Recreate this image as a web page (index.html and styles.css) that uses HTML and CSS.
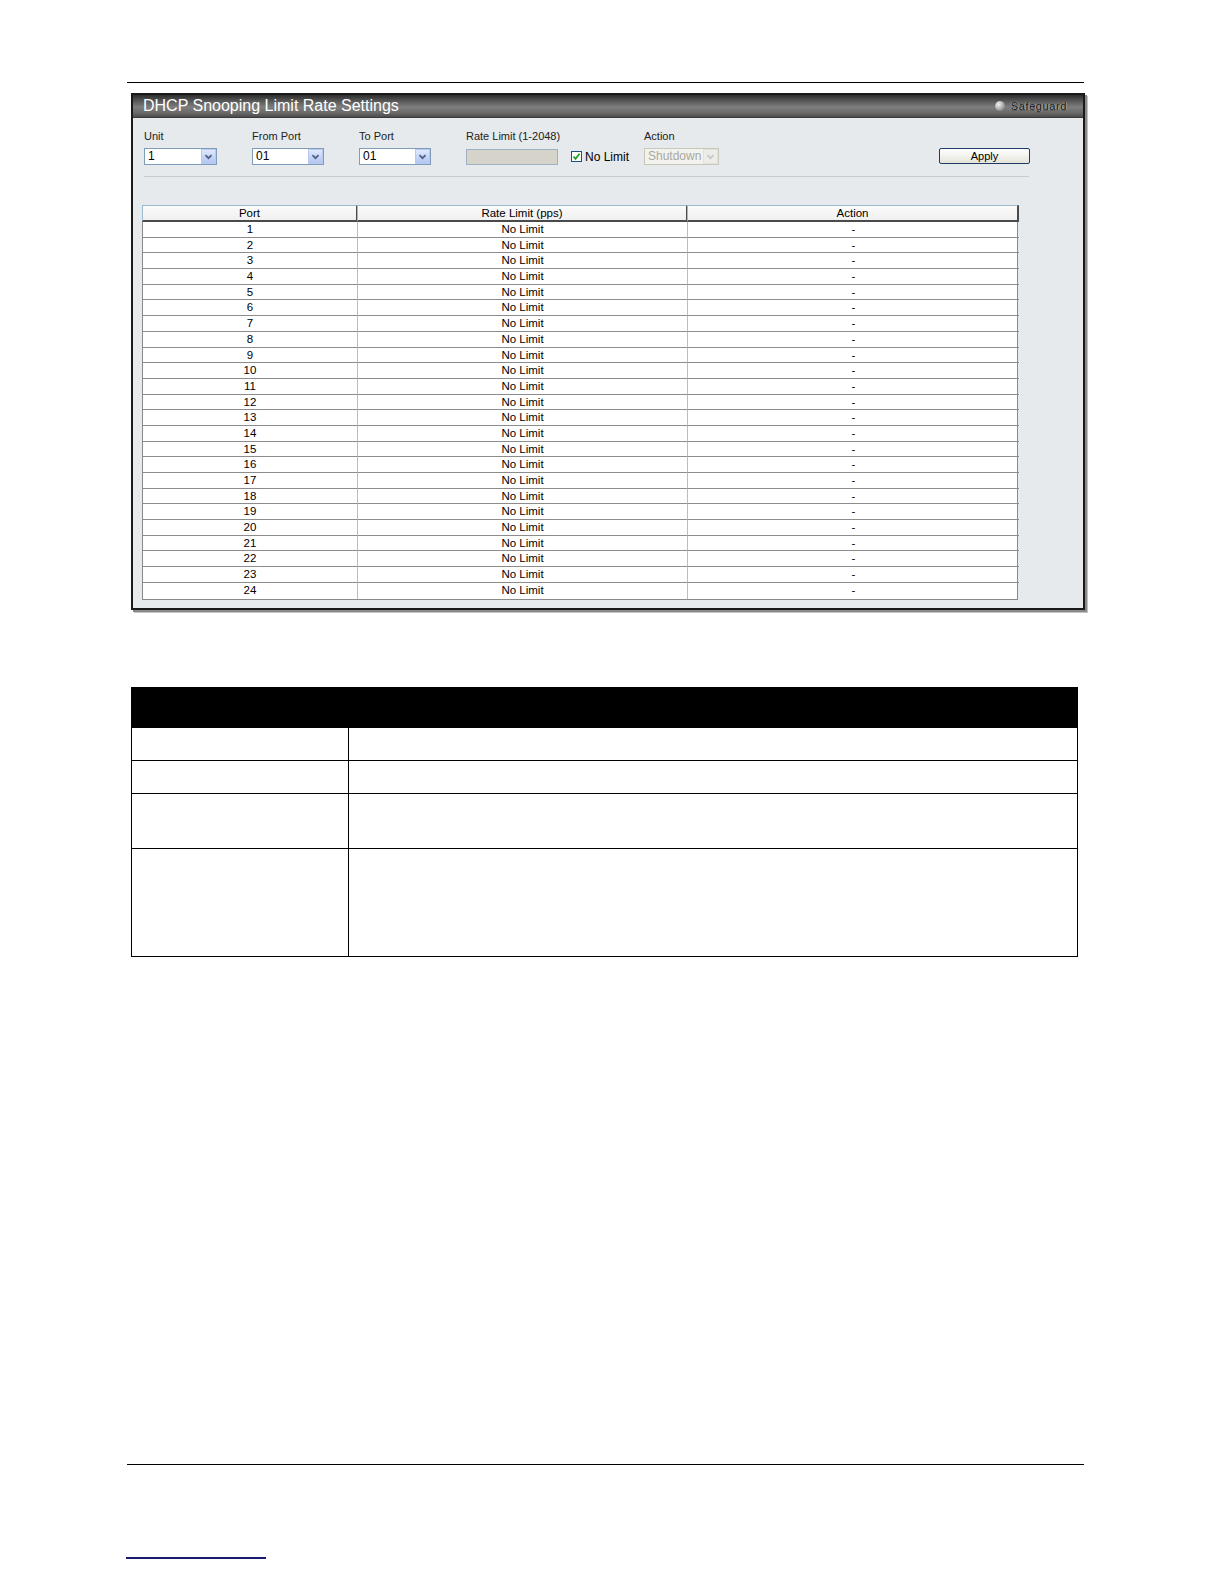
FILE: index.html
```html
<!DOCTYPE html>
<html>
<head>
<meta charset="utf-8">
<title>DHCP Snooping Limit Rate Settings</title>
<link rel="stylesheet" href="styles.css">
</head>
<body>
<div class="page">
  <div class="rule top-rule"></div>

  <div class="panel">
    <div class="titlebar">
      <span class="title">DHCP Snooping Limit Rate Settings</span>
      <span class="safeguard"><span class="led"></span>Safeguard</span>
    </div>
    <div class="panel-body">
      <div class="form-row">
        <div class="field">
          <div class="label">Unit</div>
          <div class="select w73"><span class="sel-text">1</span><span class="arrow"><svg width="15" height="15" viewBox="0 0 15 15"><path d="M4 6 L7.5 9.5 L11 6" fill="none" stroke="#4d6185" stroke-width="2"/></svg></span></div>
        </div>
        <div class="field">
          <div class="label">From Port</div>
          <div class="select w72"><span class="sel-text">01</span><span class="arrow"><svg width="15" height="15" viewBox="0 0 15 15"><path d="M4 6 L7.5 9.5 L11 6" fill="none" stroke="#4d6185" stroke-width="2"/></svg></span></div>
        </div>
        <div class="field">
          <div class="label">To Port</div>
          <div class="select w72"><span class="sel-text">01</span><span class="arrow"><svg width="15" height="15" viewBox="0 0 15 15"><path d="M4 6 L7.5 9.5 L11 6" fill="none" stroke="#4d6185" stroke-width="2"/></svg></span></div>
        </div>
        <div class="field">
          <div class="label">Rate Limit (1-2048)</div>
          <div class="rate-line">
            <div class="text-input"></div>
            <span class="checkbox"><svg width="9" height="9" viewBox="0 0 9 9"><path d="M1.5 4.5 L3.5 6.8 L7.5 1.8" fill="none" stroke="#21a121" stroke-width="1.8"/></svg></span>
            <span class="cb-label">No Limit</span>
          </div>
        </div>
        <div class="field">
          <div class="label">Action</div>
          <div class="select disabled w75"><span class="sel-text">Shutdown</span><span class="arrow"><svg width="15" height="15" viewBox="0 0 15 15"><path d="M4 6 L7.5 9.5 L11 6" fill="none" stroke="#c8c8c8" stroke-width="2"/></svg></span></div>
        </div>
        <div class="field apply-field">
          <div class="button">Apply</div>
        </div>
      </div>
      <div class="separator"></div>

      <div class="data-table">
        <div class="th">Port</div>
        <div class="th">Rate Limit (pps)</div>
        <div class="th">Action</div>
        <div class="td c1">1</div><div class="td c2">No Limit</div><div class="td c3">-</div>
        <div class="td c1">2</div><div class="td c2">No Limit</div><div class="td c3">-</div>
        <div class="td c1">3</div><div class="td c2">No Limit</div><div class="td c3">-</div>
        <div class="td c1">4</div><div class="td c2">No Limit</div><div class="td c3">-</div>
        <div class="td c1">5</div><div class="td c2">No Limit</div><div class="td c3">-</div>
        <div class="td c1">6</div><div class="td c2">No Limit</div><div class="td c3">-</div>
        <div class="td c1">7</div><div class="td c2">No Limit</div><div class="td c3">-</div>
        <div class="td c1">8</div><div class="td c2">No Limit</div><div class="td c3">-</div>
        <div class="td c1">9</div><div class="td c2">No Limit</div><div class="td c3">-</div>
        <div class="td c1">10</div><div class="td c2">No Limit</div><div class="td c3">-</div>
        <div class="td c1">11</div><div class="td c2">No Limit</div><div class="td c3">-</div>
        <div class="td c1">12</div><div class="td c2">No Limit</div><div class="td c3">-</div>
        <div class="td c1">13</div><div class="td c2">No Limit</div><div class="td c3">-</div>
        <div class="td c1">14</div><div class="td c2">No Limit</div><div class="td c3">-</div>
        <div class="td c1">15</div><div class="td c2">No Limit</div><div class="td c3">-</div>
        <div class="td c1">16</div><div class="td c2">No Limit</div><div class="td c3">-</div>
        <div class="td c1">17</div><div class="td c2">No Limit</div><div class="td c3">-</div>
        <div class="td c1">18</div><div class="td c2">No Limit</div><div class="td c3">-</div>
        <div class="td c1">19</div><div class="td c2">No Limit</div><div class="td c3">-</div>
        <div class="td c1">20</div><div class="td c2">No Limit</div><div class="td c3">-</div>
        <div class="td c1">21</div><div class="td c2">No Limit</div><div class="td c3">-</div>
        <div class="td c1">22</div><div class="td c2">No Limit</div><div class="td c3">-</div>
        <div class="td c1">23</div><div class="td c2">No Limit</div><div class="td c3">-</div>
        <div class="td c1 last">24</div><div class="td c2 last">No Limit</div><div class="td c3 last">-</div>
      </div>
    </div>
  </div>

  <table class="desc">
    <tr class="desc-head"><th></th><th></th></tr>
    <tr class="r1"><td class="dl"></td><td></td></tr>
    <tr class="r2"><td class="dl"></td><td></td></tr>
    <tr class="r3"><td class="dl"></td><td></td></tr>
    <tr class="r4"><td class="dl"></td><td></td></tr>
  </table>

  <div class="rule bottom-rule"></div>
  <div class="link-line"></div>
</div>
</body>
</html>
```

FILE: styles.css
```css
html, body {
  margin: 0;
  padding: 0;
  background: #ffffff;
}

body {
  font-family: "Liberation Sans", Arial, sans-serif;
  color: #000;
}

.page {
  width: 1224px;
  padding-top: 82px;
}

.rule {
  height: 1px;
  background: #000;
  margin-left: 127px;
  width: 957px;
}

/* ---------- panel ---------- */
.panel {
  margin-top: 10px;
  margin-left: 131px;
  width: 950px;
  border: 2px solid #1a1a1a;
  box-shadow: 2px 2px 0 #8a8a8a, 3px 3px 0 #c4c4c4;
  background: #e6eaec;
}

.titlebar {
  height: 22px;
  background: linear-gradient(#2c2c2c 0%, #555 25%, #7e7e7e 55%, #6a6a6a 80%, #4c4c4c 100%);
  border-bottom: 1px solid #3a3a3a;
  display: flex;
  align-items: center;
  justify-content: space-between;
  padding: 0 16px 0 10px;
}

.title {
  color: #fff;
  font-size: 16px;
  line-height: 22px;
}

.safeguard {
  display: flex;
  align-items: center;
  font-size: 11px;
  color: #1e1e1e;
  text-shadow: -1px 0 0 #9c9c9c, 1px 0 0 #9c9c9c, 0 1px 0 #5a5a5a;
  letter-spacing: 0.6px;
}

.led {
  width: 10px;
  height: 10px;
  border-radius: 50%;
  background: radial-gradient(circle at 35% 35%, #f2f2f2 0%, #b5b5b5 45%, #5e5e5e 100%);
  margin-right: 6px;
}

.panel-body {
  padding: 11px 0 8px 0;
}

.form-row {
  display: grid;
  grid-template-columns: 108px 107px 107px 178px 295px 91px;
  padding-left: 11px;
}

.label {
  font-size: 11px;
  line-height: 14px;
  color: #222;
  height: 14px;
  margin-bottom: 5px;
}

.select {
  height: 17px;
  box-sizing: border-box;
  border: 1px solid #7f9db9;
  background: #fff;
  display: flex;
  align-items: center;
  justify-content: space-between;
  padding-left: 3px;
}

.w73 { width: 73px; }
.w72 { width: 72px; }
.w75 { width: 75px; }

.sel-text {
  font-size: 12px;
  line-height: 15px;
  color: #000;
}

.arrow {
  width: 15px;
  height: 15px;
  box-sizing: border-box;
  border: 1px solid #b9c9ef;
  background: linear-gradient(#dfe8fd, #c3d3f7 60%, #b4c6f0);
  display: flex;
  align-items: center;
  justify-content: center;
}

.arrow svg {
  display: block;
}

.select.disabled {
  border-color: #c9c7ba;
  background: #f2f2ef;
}

.select.disabled .sel-text {
  color: #a8a8a0;
}

.select.disabled .arrow {
  border-color: #e2e2dc;
  background: #ecece8;
}

.rate-line {
  display: flex;
  align-items: center;
  height: 17px;
}

.text-input {
  width: 92px;
  height: 16px;
  box-sizing: border-box;
  border: 1px solid #9eb0c4;
  background: #d6d3ca;
  margin-top: 1px;
}

.checkbox {
  width: 11px;
  height: 11px;
  box-sizing: border-box;
  border: 1px solid #1c5180;
  background: #fff;
  margin-left: 13px;
  display: flex;
  align-items: center;
  justify-content: center;
}

.checkbox svg {
  display: block;
}

.cb-label {
  font-size: 12px;
  margin-left: 3px;
  color: #000;
}

.apply-field {
  display: flex;
  align-items: flex-end;
}

.button {
  width: 91px;
  height: 16px;
  box-sizing: border-box;
  border: 1px solid #1e3c66;
  border-radius: 2px;
  background: linear-gradient(#ffffff, #f0f0ea 60%, #e2e2da);
  font-size: 11px;
  line-height: 14px;
  text-align: center;
  color: #000;
  margin-bottom: 1px;
}

.separator {
  height: 1px;
  background: #c8cccf;
  margin: 11px 0 0 11px;
  width: 885px;
}

/* ---------- data table ---------- */
.data-table {
  margin: 28px 0 0 9px;
  width: 876px;
  display: grid;
  grid-template-columns: 215px 330px 331px;
  grid-template-rows: 17px;
  grid-auto-rows: 15.7px;
  background: #fff;
  box-sizing: border-box;
  border-left: 1px solid #8a8a8a;
  border-right: 1px solid #8a8a8a;
  border-bottom: 1px solid #8a8a8a;
}

.th {
  font-size: 11.5px;
  line-height: 14px;
  text-align: center;
  color: #000;
  background: linear-gradient(#fbfbfb, #f0f0f0);
  box-sizing: border-box;
  border-top: 1px solid #9fb9cc;
  border-left: 1px solid #9fb9cc;
  border-bottom: 2px solid #4a4a4a;
  border-right: 2px solid #4a4a4a;
  margin-left: -1px;
}

.td {
  font-size: 11.5px;
  line-height: 14.7px;
  text-align: center;
  color: #000;
  box-sizing: border-box;
  border-bottom: 1px solid #8c8c8c;
  border-right: 1px solid #bdbdbd;
  overflow: hidden;
}

.td.c3 {
  border-right: none;
}

.td.last {
  border-bottom: none;
}

/* ---------- description table ---------- */
.desc {
  margin-top: 77px;
  margin-left: 131px;
  width: 947px;
  border-collapse: collapse;
}

.desc th,
.desc td {
  border: 1px solid #000;
  padding: 0;
}

.desc-head th {
  background: #000;
  height: 39px;
}

.desc .dl {
  width: 216px;
}

.desc .r1 td { height: 32px; }
.desc .r2 td { height: 32px; }
.desc .r3 td { height: 54px; }
.desc .r4 td { height: 107px; }

.bottom-rule {
  margin-top: 507px;
}

.link-line {
  margin-top: 92px;
  margin-left: 126px;
  width: 140px;
  height: 2px;
  background: #1a1a6e;
}
```
